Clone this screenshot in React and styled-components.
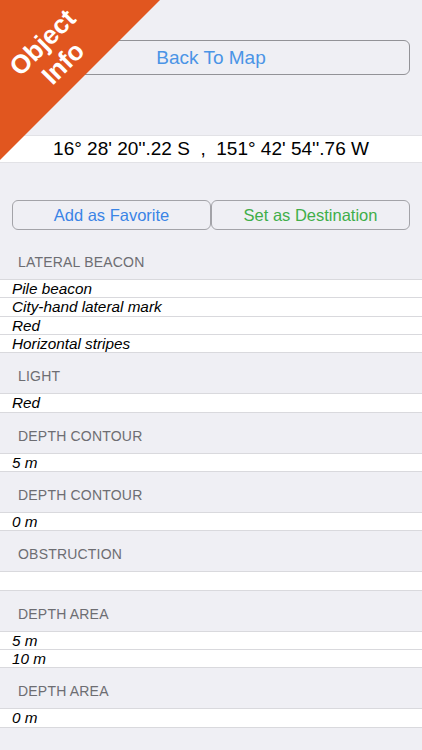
import React from "react";
import styled, { createGlobalStyle } from "styled-components";

const GlobalStyle = createGlobalStyle`
  html, body {
    margin: 0;
    padding: 0;
    background: #efeff4;
  }
  body {
    font-family: "Liberation Sans", Arial, Helvetica, sans-serif;
  }
`;

const Page = styled.div`
  position: relative;
  width: 422px;
  min-height: 750px;
  background: #efeff4;
  overflow: hidden;
`;

const Corner = styled.div`
  position: absolute;
  top: 0;
  left: 0;
  width: 160px;
  height: 160px;
  background: #e1561f;
  clip-path: polygon(0 0, 100% 0, 0 100%);
  z-index: 2;
`;

const CornerLabel = styled.div`
  position: absolute;
  left: -32px;
  top: 24px;
  width: 170px;
  height: 58px;
  transform: rotate(-45deg);
  color: #ffffff;
  font-weight: 700;
  font-size: 26px;
  line-height: 29px;
  text-align: center;
`;

const Top = styled.div`
  padding: 40px 12px 0;
`;

const BackButton = styled.button`
  display: block;
  width: 100%;
  height: 35px;
  background: transparent;
  border: 1px solid #929297;
  border-radius: 6px;
  color: #4a94e6;
  font: 400 19px "Liberation Sans", Arial, sans-serif;
  padding: 0;
`;

const CoordRow = styled.div`
  margin-top: 60px;
  height: 28px;
  background: #ffffff;
  border-top: 1px solid #e2e2e6;
  border-bottom: 1px solid #e2e2e6;
  box-sizing: border-box;
  display: flex;
  align-items: center;
  justify-content: center;
  font-size: 19px;
  color: #000000;
  white-space: pre;
`;

const Actions = styled.div`
  margin-top: 37px;
  padding: 0 12px 0 12px;
  display: grid;
  grid-template-columns: 1fr 1fr;
`;

const ActionButton = styled.button`
  height: 30px;
  background: transparent;
  border: 1px solid #a3a3a8;
  border-radius: 6px;
  color: ${(p) => p.$color};
  font: 400 16.5px "Liberation Sans", Arial, sans-serif;
  padding: 0;
`;

const Header = styled.div`
  height: ${(p) => (p.$first ? "49px" : "40px")};
  box-sizing: border-box;
  display: flex;
  align-items: flex-end;
  padding: 0 18px 8px;
  font-size: 14px;
  line-height: 17px;
  color: #6d6d72;
  letter-spacing: 0.2px;
`;

const List = styled.div`
  background: #ffffff;
  border-bottom: 1px solid #d9d9dd;
`;

const Row = styled.div`
  height: 17.33px;
  border-top: 1px solid #d9d9dd;
  padding-left: 12px;
  font-style: italic;
  font-size: 15.3px;
  line-height: 17px;
  color: #000000;
`;

const sections = [
  { title: "LATERAL BEACON", rows: ["Pile beacon", "City-hand lateral mark", "Red", "Horizontal stripes"] },
  { title: "LIGHT", rows: ["Red"] },
  { title: "DEPTH CONTOUR", rows: ["5 m"] },
  { title: "DEPTH CONTOUR", rows: ["0 m"] },
  { title: "OBSTRUCTION", rows: [""] },
  { title: "DEPTH AREA", rows: ["5 m", "10 m"] },
  { title: "DEPTH AREA", rows: ["0 m"] },
];

export default function App() {
  return (
    <Page>
      <GlobalStyle />
      <Corner>
        <CornerLabel>
          Object
          <br />
          Info
        </CornerLabel>
      </Corner>
      <Top>
        <BackButton>Back To Map</BackButton>
      </Top>
      <CoordRow>{"16° 28' 20''.22 S  ,  151° 42' 54''.76 W"}</CoordRow>
      <Actions>
        <ActionButton $color="#3a84e6">Add as Favorite</ActionButton>
        <ActionButton $color="#3fae49">Set as Destination</ActionButton>
      </Actions>
      {sections.map((s, i) => (
        <React.Fragment key={i}>
          <Header $first={i === 0}>{s.title}</Header>
          <List>
            {s.rows.map((r, j) => (
              <Row key={j}>{r}</Row>
            ))}
          </List>
        </React.Fragment>
      ))}
    </Page>
  );
}
